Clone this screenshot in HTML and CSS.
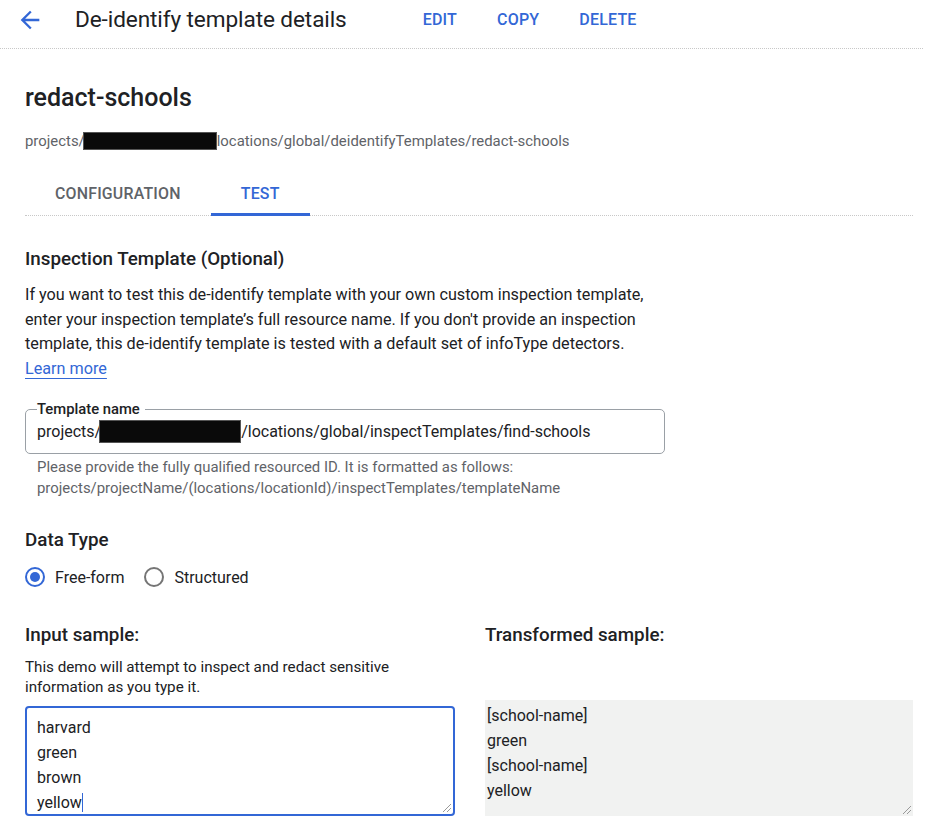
FILE: index.html
```html
<!DOCTYPE html>
<html>
<head>
<meta charset="utf-8">
<link rel="stylesheet" href="styles.css">
</head>
<body>
<header class="topbar">
  <svg class="back" width="28" height="28" viewBox="0 0 24 24"><path d="M20 11H7.83l5.59-5.59L12 4l-8 8 8 8 1.41-1.41L7.83 13H20v-2z" fill="#3367d6"/></svg>
  <h1 class="title">De-identify template details</h1>
  <nav class="actions">
    <span class="action">EDIT</span>
    <span class="action">COPY</span>
    <span class="action">DELETE</span>
  </nav>
</header>
<main class="content">
  <h2 class="name">redact-schools</h2>
  <div class="path">projects/<span class="redact r1"></span>locations/global/deidentifyTemplates/redact-schools</div>
  <div class="tabs">
    <div class="tab">CONFIGURATION</div>
    <div class="tab active">TEST</div>
  </div>

  <h3 class="section">Inspection Template (Optional)</h3>
  <p class="desc">If you want to test this de-identify template with your own custom inspection template, enter your inspection template’s full resource name. If you don't provide an inspection template, this de-identify template is tested with a default set of infoType detectors.<br><a class="link">Learn more</a></p>

  <fieldset class="field">
    <legend class="legend">Template name</legend>
    <div class="value">projects/<span class="redact r2"></span>/locations/global/inspectTemplates/find-schools</div>
  </fieldset>
  <div class="helper">Please provide the fully qualified resourced ID. It is formatted as follows:<br>projects/projectName/(locations/locationId)/inspectTemplates/templateName</div>

  <h3 class="section dt">Data Type</h3>
  <div class="radios">
    <label class="radio"><span class="dot on"></span>Free-form</label>
    <label class="radio"><span class="dot"></span>Structured</label>
  </div>

  <div class="cols">
    <div class="col">
      <h3 class="section sample">Input sample:</h3>
      <p class="hint">This demo will attempt to inspect and redact sensitive information as you type it.</p>
      <div class="textarea input">harvard<br>green<br>brown<br>yellow<span class="caret"></span><span class="grip"></span></div>
    </div>
    <div class="col">
      <h3 class="section sample">Transformed sample:</h3>
      <div class="textarea output">[school-name]<br>green<br>[school-name]<br>yellow<span class="grip"></span></div>
    </div>
  </div>
</main>
</body>
</html>
```
FILE: styles.css
```css
* { box-sizing: border-box; }
body {
  margin: 0;
  font-family: Roboto, "Noto Sans", sans-serif;
  color: #202124;
  background: #fff;
}
.topbar {
  height: 49px;
  display: flex;
  align-items: center;
  border-bottom: 1px dotted #c8c8c8;
  padding-left: 16px;
  margin-right: 2px;
}
.back { margin-top: -9px; width: 28px; height: 28px; flex: none; }
.title {
  margin: -9px 0 0 31px;
  font-size: 22.6px;
  font-weight: 400;
  color: #202124;
  letter-spacing: -0.1px;
}
.actions { display: flex; margin-left: 76px; margin-top: -9px; gap: 40px; }
.action {
  color: #3367d6;
  font-size: 16px;
  font-weight: 500;
  letter-spacing: 0.2px;
}
.content { padding: 0 12px 0 25px; }
.name {
  margin: 35px 0 0;
  font-size: 25px;
  font-weight: 500;
  line-height: 28px;
}
.path {
  margin-top: 20px;
  font-size: 14.9px;
  color: #5f6368;
  line-height: 18px;
  display: flex;
  align-items: center;
}
.redact {
  display: inline-block;
  background: #0a0a0a;
  border: 1px solid #555;
}
.r1 { width: 134px; height: 18px; margin-left: -2px; }
.r2 { width: 142px; height: 23px; margin-left: -2px; }
.tabs {
  display: flex;
  margin-top: 29px;
  border-bottom: 1px dotted #c8c8c8;
  height: 37px;
}
.tab {
  font-size: 15.9px;
  font-weight: 500;
  color: #5f6368;
  padding: 5px 30px 0;
  letter-spacing: 0.2px;
  height: 37px;
}
.tab.active {
  color: #3367d6;
  border-bottom: 3px solid #3367d6;
  padding: 5px 0 0;
  width: 99px;
  text-align: center;
}
.section {
  margin: 31px 0 0;
  font-size: 18.8px;
  font-weight: 500;
  line-height: 24px;
}
.desc {
  margin: 12px 0 0;
  font-size: 16.2px;
  line-height: 24.5px;
  width: 650px;
}
.link {
  color: #3367d6;
  text-decoration: underline;
  text-decoration-color: #3367d6;
  text-underline-offset: 4px;
}
.field {
  margin: 20px 0 0;
  width: 640px;
  height: 53px;
  border: 1px solid #9aa0a6;
  border-radius: 5px;
  padding: 0 11px;
}
.legend {
  font-size: 14.8px;
  font-weight: 500;
  padding: 0 5px 0 0;
  margin-left: 0;
  line-height: 16px;
}
.value {
  font-size: 16px;
  display: flex;
  align-items: center;
  margin-top: 3px;
  line-height: 23px;
}
.helper {
  margin: 3px 0 0 12px;
  font-size: 14.9px;
  color: #5f6368;
  line-height: 21px;
}
.section.dt { margin-top: 29px; }
.radios {
  display: flex;
  margin-top: 15px;
  gap: 20px;
}
.radio {
  display: flex;
  align-items: center;
  font-size: 16px;
  gap: 10px;
}
.dot {
  width: 20px;
  height: 20px;
  border: 2px solid #757575;
  border-radius: 50%;
  position: relative;
}
.dot.on { border-color: #3367d6; }
.dot.on::after {
  content: "";
  position: absolute;
  left: 3px; top: 3px;
  width: 10px; height: 10px;
  border-radius: 50%;
  background: #3367d6;
}
.cols {
  display: grid;
  grid-template-columns: 430px 428px;
  column-gap: 30px;
  margin-top: 36px;
}
.col { display: flex; flex-direction: column; }
.section.sample { margin-top: 0; }
.hint {
  margin: 10px 0 0;
  font-size: 15.2px;
  line-height: 20px;
  height: 40px;
  max-width: 400px;
}
.textarea {
  position: relative;
  font-size: 16px;
  line-height: 25px;
}
.input {
  margin-top: 9px;
  height: 110px;
  border: 2px solid #3367d6;
  border-radius: 4px;
  padding: 7px 10px 5px;
}
.output {
  margin-top: 53px;
  height: 116px;
  background: #f1f2f1;
  padding: 3px 2px;
}
.caret {
  display: inline-block;
  width: 1px;
  height: 19px;
  background: #3367d6;
  vertical-align: -4px;
}
.grip {
  position: absolute;
  right: 2px;
  bottom: 2px;
  width: 8px;
  height: 8px;
  background: linear-gradient(135deg, transparent 45%, #999 45%, #999 52%, transparent 52%, transparent 70%, #999 70%, #999 77%, transparent 77%);
}
```
